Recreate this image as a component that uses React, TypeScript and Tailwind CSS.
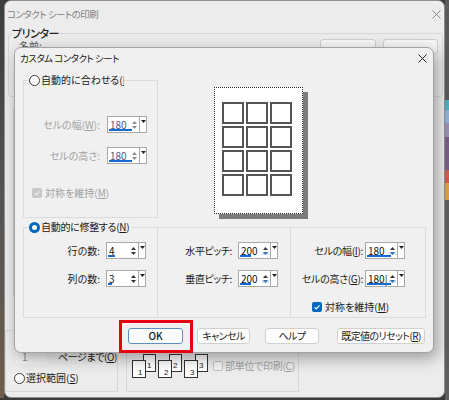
import React from 'react';

const Tri = ({ up }: { up?: boolean }) => (
  <svg width="5" height="3" viewBox="0 0 5 3" className="block">
    <polygon points={up ? '0,3 2.5,0 5,3' : '0,0 5,0 2.5,3'} fill="currentColor" />
  </svg>
);

type SpinProps = { value: string; line: string; disabled?: boolean; hot?: boolean };

const Spin = ({ value, line, disabled, hot }: SpinProps) => (
  <div className="flex h-[17px] w-[40px] shrink-0 border border-[#a8a8a8] bg-white">
    <div
      className={`relative flex flex-1 items-center pl-[2px] text-[10px] leading-none ${
        disabled ? 'text-[#3f5d86]' : 'text-[#111111]'
      }`}
    >
      {value}
      <div className={`absolute bottom-[1px] left-[1px] h-[2px] bg-[#1769d2] ${line}`} />
    </div>
    <div
      className={`flex w-[7px] flex-col items-center justify-center gap-[2px] ${
        disabled ? 'text-[#8c8c8c]' : 'text-[#333333]'
      }`}
    >
      <Tri up />
      <div className={hot ? 'bg-[#cde3f7] px-[1px] text-[#3a6ea5]' : ''}>
        <Tri />
      </div>
    </div>
    <div className="ml-[1px] flex w-[7px] justify-center border-l border-[#a8a8a8] pt-[3px] text-[#222222]">
      <Tri />
    </div>
  </div>
);

const Radio = ({ on }: { on?: boolean }) =>
  on ? (
    <span className="inline-block h-[11px] w-[11px] shrink-0 rounded-full border-[3px] border-[#0067c0] bg-white" />
  ) : (
    <span className="inline-block h-[11px] w-[11px] shrink-0 rounded-full border border-[#3a3a3a] bg-white" />
  );

const Check = ({ on }: { on?: boolean }) => (
  <span
    className={`flex h-[10px] w-[10px] shrink-0 items-center justify-center rounded-[2px] ${
      on ? 'bg-[#0067c0]' : 'bg-[#c8c8c8]'
    }`}
  >
    <svg width="8" height="8" viewBox="0 0 8 8">
      <path d="M1.6 4.2 3.2 5.8 6.5 2.3" stroke={on ? '#ffffff' : '#ececec'} strokeWidth="1.2" fill="none" />
    </svg>
  </span>
);

const Close = ({ color }: { color: string }) => (
  <svg width="9" height="9" viewBox="0 0 9 9">
    <path d="M0.5 0.5 8.5 8.5M8.5 0.5 0.5 8.5" stroke={color} strokeWidth="1" />
  </svg>
);

// mnemonic letter, thin underline
const K = ({ c }: { c: string }) => (
  <span className="underline decoration-[0.5px] underline-offset-[1px]">{c}</span>
);

const Btn = ({ label, cls }: { label: React.ReactNode; cls: string }) => (
  <div
    className={`flex h-[16px] items-center justify-center whitespace-nowrap rounded-[3px] border bg-[#fdfdfd] text-[10px] leading-none text-[#1b1b1b] ${cls}`}
  >
    {label}
  </div>
);

// collate icon: back page upper right, front page lower left
const Collate = () => (
  <svg width="77" height="25" viewBox="0 0 77 25" className="shrink-0">
    {[0, 26, 52].map((x, i) => (
      <g key={x} fontSize="8" fontFamily="Liberation Sans, sans-serif" fill="#222">
        <rect x={x + 11.5} y={0.5} width={12} height={17} fill="#fff" stroke="#333" />
        <text x={x + 15} y={14}>{i + 1}</text>
        <rect x={x + 0.5} y={6.5} width={13} height={17} fill="#fff" stroke="#333" />
        <text x={x + 6} y={21}>{i + 1}</text>
      </g>
    ))}
  </svg>
);

const Page = () => (
  <div className="ml-[56px] mt-[13px] h-[127px] w-[89px] border border-dotted border-[#2a2a2a] bg-white pl-[7px] pt-[14px] shadow-[5px_5px_0_0_#7d7d7d]">
    <div className="grid w-[70px] grid-cols-3 gap-[2px]">
      {Array.from({ length: 12 }).map((_, i) => (
        <div key={i} className="h-[22px] w-[22px] border-2 border-[#555555] bg-white" />
      ))}
    </div>
  </div>
);

const Dialog = () => (
  <div className="absolute left-[14px] top-[47px] flex h-[306px] w-[420px] flex-col rounded-[7px] border border-[#a3a3a3] bg-[#f0f0f0] shadow-[3px_5px_16px_rgba(0,0,0,0.35)]">
    <div className="flex h-[20px] shrink-0 items-center justify-between pl-[5px] pr-[6px]">
      <span className="whitespace-pre text-[9.5px] tracking-[-0.5px]">カスタム コンタクト シート</span>
      <Close color="#1f1f1f" />
    </div>

    {/* upper part: fit group + preview */}
    <div className="mt-[6px] flex items-start">
      <fieldset className="ml-[8px] h-[144px] w-[135px] border border-[#dadada] px-0">
        <legend className="ml-[5px] flex h-[12px] w-[95px] items-center gap-[1px] overflow-hidden whitespace-nowrap">
          <Radio />
          <span>
            自動的に合わせる(<K c="L" />)
          </span>
        </legend>
        <div className="flex flex-col pt-[30px] text-[#a2a2a2]">
          <div className="flex items-center">
            <span className="w-[76px] whitespace-nowrap text-right">
              セルの幅(<K c="W" />):
            </span>
            <div className="ml-[7px]">
              <Spin value="180" line="w-[23px]" disabled />
            </div>
          </div>
          <div className="mt-[14px] flex items-center">
            <span className="w-[76px] whitespace-nowrap text-right">セルの高さ:</span>
            <div className="ml-[7px]">
              <Spin value="180" line="w-[23px]" disabled />
            </div>
          </div>
          <div className="ml-[8px] mt-[23px] flex items-center gap-[3px]">
            <Check />
            <span className="whitespace-nowrap">
              対称を維持(<K c="M" />)
            </span>
          </div>
        </div>
      </fieldset>
      <Page />
    </div>

    {/* lower part: adjust group */}
    <div className="ml-[8px] mt-[3px] flex items-end">
      <fieldset className="h-[97px] w-[135px] border border-[#dadada] px-0">
        <legend className="ml-[5px] flex h-[12px] items-center gap-[1px] whitespace-nowrap pr-[3px] tracking-[-0.3px]">
          <Radio on />
          <span>
            自動的に修整する(<K c="N" />)
          </span>
        </legend>
        <div className="flex flex-col pt-[9px]">
          <div className="flex items-center">
            <span className="w-[76px] text-right">行の数:</span>
            <div className="ml-[6px]">
              <Spin value="4" line="w-[7px]" />
            </div>
          </div>
          <div className="mt-[11px] flex items-center">
            <span className="w-[76px] text-right">列の数:</span>
            <div className="ml-[6px]">
              <Spin value="3" line="w-[4px]" />
            </div>
          </div>
        </div>
      </fieldset>
      <div className="-ml-px h-[91px] w-[134px] border border-[#dadada] pt-[14px]">
        <div className="flex items-center">
          <span className="w-[74px] whitespace-nowrap text-right tracking-[-0.4px]">水平ピッチ:</span>
          <div className="ml-[6px]">
            <Spin value="200" line="w-[11px]" hot />
          </div>
        </div>
        <div className="mt-[11px] flex items-center">
          <span className="w-[74px] whitespace-nowrap text-right tracking-[-0.4px]">垂直ピッチ:</span>
          <div className="ml-[6px]">
            <Spin value="200" line="w-[11px]" hot />
          </div>
        </div>
      </div>
      <div className="-ml-px h-[91px] w-[136px] border border-[#dadada] pt-[14px]">
        <div className="flex items-center">
          <span className="w-[72px] whitespace-nowrap text-right tracking-[-0.3px]">
            セルの幅(<K c="I" />):
          </span>
          <div className="ml-[2px]">
            <Spin value="180" line="w-[24px]" hot />
          </div>
        </div>
        <div className="mt-[11px] flex items-center">
          <span className="w-[72px] whitespace-nowrap text-right tracking-[-0.3px]">
            セルの高さ(<K c="G" />):
          </span>
          <div className="ml-[2px]">
            <Spin value="180|" line="w-[24px]" hot />
          </div>
        </div>
        <div className="ml-[21px] mt-[14px] flex items-center gap-[3px]">
          <Check on />
          <span className="whitespace-nowrap">
            対称を維持(<K c="M" />)
          </span>
        </div>
      </div>
    </div>

    {/* buttons */}
    <div className="mt-[10px] flex">
      <Btn label="OK" cls="ml-[113px] w-[55px] border-[#5a8fcc] text-[9px] font-medium" />
      <Btn label="キャンセル" cls="ml-[14px] w-[53px] border-[#d0d0d0] tracking-[-0.6px]" />
      <Btn label="ヘルプ" cls="ml-[15px] w-[54px] border-[#d0d0d0] tracking-[-0.5px]" />
      <Btn
        label={
          <span>
            既定値のリセット(<K c="R" />)
          </span>
        }
        cls="ml-[18px] w-[88px] border-[#d0d0d0] tracking-[-0.6px]"
      />
    </div>
  </div>
);

export default function App() {
  return (
    <div className="relative flex h-[400px] w-[449px] overflow-hidden bg-[#3a3a3a] font-['Noto_Sans_CJK_JP',sans-serif] text-[10px] leading-[12px] text-[#1a1a1a] [font-feature-settings:'palt']">
      <div className="h-[398px] w-[4px] shrink-0 bg-gradient-to-b from-[#3d3d3d] via-[#555555] to-[#6e5d4c]" />

      {/* background window */}
      <div className="flex h-[398px] w-[441px] shrink-0 flex-col rounded-[7px] border border-[#8f8f8f] bg-[#ececec]">
        <div className="flex h-[26px] shrink-0 items-center justify-between pl-[2px] pr-[3px] text-[#808080]">
          <span className="whitespace-pre text-[9.5px] tracking-[-0.5px]">コンタクト シートの印刷</span>
          <Close color="#8a8a8a" />
        </div>
        <fieldset className="ml-[3px] h-[70px] w-[435px] shrink-0 rounded-[4px] border border-[#d6d6d6] px-[3px]">
          <legend className="text-[11px] font-medium tracking-[-0.5px] text-[#222222]">プリンター</legend>
          <div className="flex items-start justify-between pl-[7px] pr-[1px]">
            <span className="pt-[1px] text-[#555555]">名前:</span>
            <div className="flex gap-[7px]">
              <div className="h-[15px] w-[56px] rounded-[3px] border border-[#cfcfcf] bg-[#f7f7f7]" />
              <div className="h-[15px] w-[55px] rounded-[3px] border border-[#cfcfcf] bg-[#f7f7f7]" />
            </div>
          </div>
        </fieldset>
        <div className="ml-[8px] mt-[10px] h-[190px] w-[40px] border-l border-[#d2d2d2]" />

        <div className="mb-[5px] mt-auto flex items-end">
          <div className="h-[62px] w-[113px] shrink-0 border border-[#d8d8d8] pt-[19px]">
            <div className="flex h-[14px] items-center whitespace-nowrap">
              <div className="ml-[10px] flex h-[14px] w-[31px] shrink-0 items-center bg-[#f3f3f3] pl-[6px] text-[#8a8a8a]">
                1
              </div>
              <span className="ml-[11px] tracking-[-0.4px]">
                ページまで(<K c="O" />)
              </span>
            </div>
            <div className="ml-[8px] mt-[8px] flex h-[12px] items-center gap-[1px] whitespace-nowrap">
              <Radio />
              <span>
                選択範囲(<K c="S" />)
              </span>
            </div>
          </div>
          <div className="ml-[8px] flex h-[62px] w-[173px] shrink-0 items-start border border-[#d8d8d8] pl-[5px] pt-[23px]">
            <Collate />
            <div className="ml-[4px] mt-[6px] flex items-center gap-[2px] whitespace-nowrap text-[#a0a0a0]">
              <span className="h-[10px] w-[10px] shrink-0 rounded-[2px] border border-[#c4c4c4] bg-[#f4f4f4]" />
              <span className="tracking-[-0.3px]">
                部単位で印刷(<K c="C" />)
              </span>
            </div>
          </div>
        </div>
      </div>

      <div className="flex h-[400px] w-[4px] shrink-0 flex-col">
        <div className="h-[100px] bg-[#5a5a5a]" />
        <div className="h-[10px] bg-[#4bb0c0]" />
        <div className="h-[13px] bg-[#8fb0d8]" />
        <div className="h-[14px] bg-[#9a8fb5]" />
        <div className="h-[33px] bg-[#7a5d88]" />
        <div className="h-[13px] bg-[#cf5f50]" />
        <div className="h-[17px] bg-[#dfa050]" />
        <div className="flex-1 bg-[#5e5e5e]" />
      </div>

      <Dialog />

      {/* highlight around OK */}
      <div className="absolute left-[119px] top-[320px] h-[33px] w-[74px] border-[3px] border-[#e50012]" />
    </div>
  );
}
